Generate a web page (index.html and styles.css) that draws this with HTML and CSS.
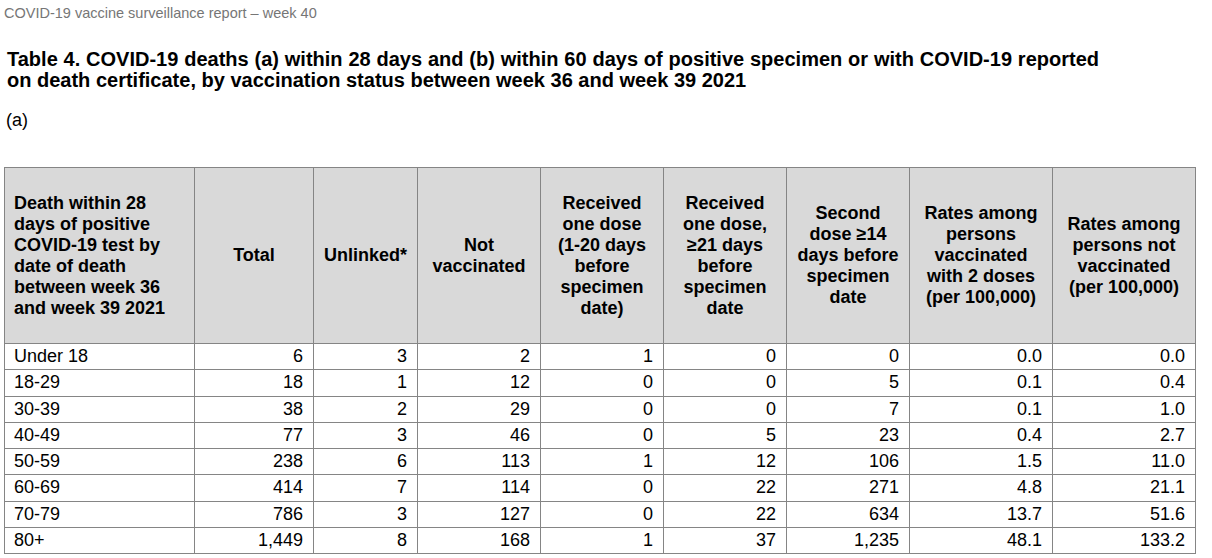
FILE: index.html
```html
<!DOCTYPE html>
<html lang="en">
<head>
<meta charset="utf-8">
<title>COVID-19 vaccine surveillance report – week 40</title>
<link rel="stylesheet" href="styles.css">
</head>
<body>
<div class="page">
  <div class="running-head">COVID-19 vaccine surveillance report – week 40</div>
  <h1 class="title"><span class="title-line-justified">Table 4. COVID-19 deaths (a) within 28 days and (b) within 60 days of positive specimen or with COVID-19 reported</span> <span class="title-line">on death certificate, by vaccination status between week 36 and week 39 2021</span></h1>
  <p class="part">(a)</p>
  <table class="data">
    <colgroup>
      <col class="c-age">
      <col class="c-total">
      <col class="c-unlinked">
      <col class="c-std">
      <col class="c-std">
      <col class="c-std">
      <col class="c-std">
      <col class="c-rate">
      <col class="c-rate">
    </colgroup>
    <thead>
      <tr>
        <th class="first">Death within 28 days of positive COVID-19 test by date of death between week 36 and week 39 2021</th>
        <th>Total</th>
        <th>Unlinked*</th>
        <th>Not vaccinated</th>
        <th>Received one dose <span class="nowrap">(1-20 days</span> before specimen date)</th>
        <th>Received one dose, ≥21 days before specimen date</th>
        <th>Second dose ≥14 days before specimen date</th>
        <th>Rates among persons vaccinated with 2 doses (per 100,000)</th>
        <th>Rates among persons not vaccinated (per 100,000)</th>
      </tr>
    </thead>
    <tbody>
      <tr><td class="first">Under 18</td><td>6</td><td>3</td><td>2</td><td>1</td><td>0</td><td>0</td><td>0.0</td><td>0.0</td></tr>
      <tr><td class="first">18-29</td><td>18</td><td>1</td><td>12</td><td>0</td><td>0</td><td>5</td><td>0.1</td><td>0.4</td></tr>
      <tr><td class="first">30-39</td><td>38</td><td>2</td><td>29</td><td>0</td><td>0</td><td>7</td><td>0.1</td><td>1.0</td></tr>
      <tr><td class="first">40-49</td><td>77</td><td>3</td><td>46</td><td>0</td><td>5</td><td>23</td><td>0.4</td><td>2.7</td></tr>
      <tr><td class="first">50-59</td><td>238</td><td>6</td><td>113</td><td>1</td><td>12</td><td>106</td><td>1.5</td><td>11.0</td></tr>
      <tr><td class="first">60-69</td><td>414</td><td>7</td><td>114</td><td>0</td><td>22</td><td>271</td><td>4.8</td><td>21.1</td></tr>
      <tr><td class="first">70-79</td><td>786</td><td>3</td><td>127</td><td>0</td><td>22</td><td>634</td><td>13.7</td><td>51.6</td></tr>
      <tr><td class="first">80+</td><td>1,449</td><td>8</td><td>168</td><td>1</td><td>37</td><td>1,235</td><td>48.1</td><td>133.2</td></tr>
    </tbody>
  </table>
</div>
</body>
</html>
```

FILE: styles.css
```css
html, body {
  margin: 0;
  padding: 0;
  background: #ffffff;
}

body {
  font-family: "Liberation Sans", Arial, Helvetica, sans-serif;
  color: #000000;
}

.page {
  padding: 4px 0 0 4px;
}

.running-head {
  font-size: 14.5px;
  line-height: 17px;
  color: #767676;
  padding-top: 1px;
}

.title {
  margin: 27px 0 0 3px;
  font-size: 20px;
  line-height: 21px;
  font-weight: bold;
}

.title-line-justified {
  display: block;
  width: 1092px;
  text-align: justify;
  text-align-last: justify;
}

.title-line {
  display: block;
}

.part {
  margin: 19px 0 0 2px;
  font-size: 18px;
  line-height: 21px;
}

.data {
  margin-top: 36px;
  border-collapse: collapse;
  table-layout: fixed;
  width: 1192px;
  font-size: 18px;
  line-height: 21px;
}

.c-age { width: 190px; }
.c-total { width: 119px; }
.c-unlinked { width: 104px; }
.c-std { width: 123px; }
.c-rate { width: 143px; }

.data th,
.data td {
  border: 1px solid #858585;
}

.data th {
  background: #d9d9d9;
  font-weight: bold;
  text-align: center;
  vertical-align: middle;
  height: 176px;
  padding: 0 8px;
  box-sizing: border-box;
}

.data th.first {
  text-align: left;
  padding: 0 10px 0 9px;
}

.nowrap {
  white-space: nowrap;
}

.data td {
  height: 26.25px;
  padding: 0 10px 0 9px;
  text-align: right;
  vertical-align: middle;
  box-sizing: border-box;
}

.data td.first {
  text-align: left;
}
```
